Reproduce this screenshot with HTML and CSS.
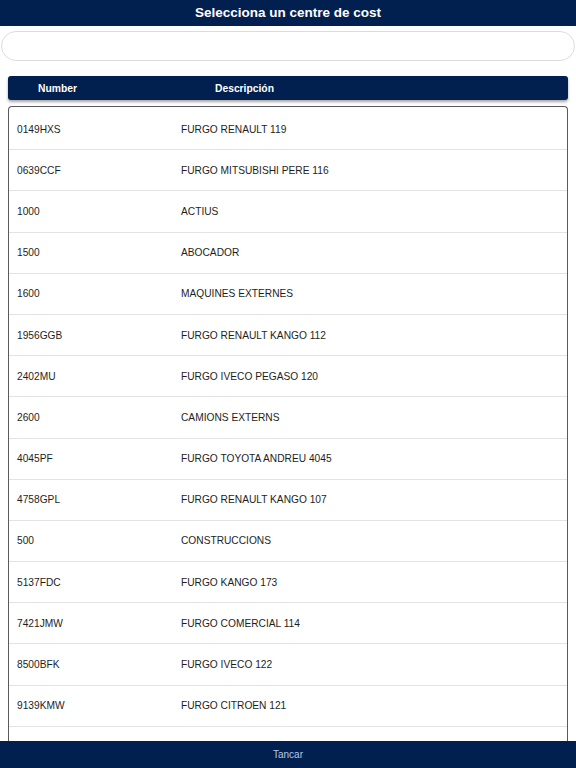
FILE: index.html
```html
<!DOCTYPE html>
<html lang="ca">
<head>
<meta charset="utf-8">
<title>Selecciona un centre de cost</title>
<link rel="stylesheet" href="styles.css">
</head>
<body>
<div class="page">
  <header class="titlebar">Selecciona un centre de cost</header>
  <div class="search"></div>
  <div class="thead">
    <span class="col-num">Number</span>
    <span class="col-desc">Descripción</span>
  </div>
  <div class="list">
    <div class="row"><span class="c-num">0149HXS</span><span class="c-desc">FURGO RENAULT 119</span></div>
    <div class="row"><span class="c-num">0639CCF</span><span class="c-desc">FURGO MITSUBISHI PERE 116</span></div>
    <div class="row"><span class="c-num">1000</span><span class="c-desc">ACTIUS</span></div>
    <div class="row"><span class="c-num">1500</span><span class="c-desc">ABOCADOR</span></div>
    <div class="row"><span class="c-num">1600</span><span class="c-desc">MAQUINES EXTERNES</span></div>
    <div class="row"><span class="c-num">1956GGB</span><span class="c-desc">FURGO RENAULT KANGO 112</span></div>
    <div class="row"><span class="c-num">2402MU</span><span class="c-desc">FURGO IVECO PEGASO 120</span></div>
    <div class="row"><span class="c-num">2600</span><span class="c-desc">CAMIONS EXTERNS</span></div>
    <div class="row"><span class="c-num">4045PF</span><span class="c-desc">FURGO TOYOTA ANDREU 4045</span></div>
    <div class="row"><span class="c-num">4758GPL</span><span class="c-desc">FURGO RENAULT KANGO 107</span></div>
    <div class="row"><span class="c-num">500</span><span class="c-desc">CONSTRUCCIONS</span></div>
    <div class="row"><span class="c-num">5137FDC</span><span class="c-desc">FURGO KANGO 173</span></div>
    <div class="row"><span class="c-num">7421JMW</span><span class="c-desc">FURGO COMERCIAL 114</span></div>
    <div class="row"><span class="c-num">8500BFK</span><span class="c-desc">FURGO IVECO 122</span></div>
    <div class="row"><span class="c-num">9139KMW</span><span class="c-desc">FURGO CITROEN 121</span></div>
    <div class="row"><span class="c-num"></span><span class="c-desc"></span></div>
  </div>
  <footer class="footer">Tancar</footer>
</div>
</body>
</html>
```
FILE: styles.css
```css
html, body {
  margin: 0;
  padding: 0;
  background: #ffffff;
}
body {
  font-family: "Liberation Sans", Arial, Helvetica, sans-serif;
  color: #1e1e1e;
}
.page {
  height: 768px;
  display: flex;
  flex-direction: column;
  overflow: hidden;
}
.titlebar {
  flex: 0 0 26px;
  background: #02204f;
  color: #ffffff;
  font-weight: bold;
  font-size: 13.5px;
  line-height: 26px;
  text-align: center;
}
.search {
  flex: 0 0 30px;
  margin: 5px 1px 0 1px;
  box-sizing: border-box;
  border: 1px solid #dcdcdc;
  border-radius: 15px;
  background: #ffffff;
}
.thead {
  flex: 0 0 24px;
  margin: 15px 8px 0 8px;
  background: #02204f;
  border-radius: 3px;
  box-shadow: 0 2px 3px rgba(0, 0, 0, 0.35);
  color: #ffffff;
  font-weight: bold;
  font-size: 10.3px;
  display: flex;
  align-items: center;
}
.col-num {
  width: 207px;
  padding-left: 30px;
  box-sizing: border-box;
}
.list {
  flex: 1 1 auto;
  margin: 6px 8px 0 8px;
  border: 1px solid #5a5a5a;
  border-bottom: none;
  border-radius: 4px 4px 0 0;
  padding-top: 2px;
  overflow: hidden;
  background: #ffffff;
}
.row {
  height: 41.2px;
  box-sizing: border-box;
  border-bottom: 1px solid #e3e3e3;
  display: flex;
  align-items: center;
  font-size: 10.2px;
}
.c-num {
  width: 172px;
  padding-left: 8px;
  box-sizing: border-box;
}
.footer {
  flex: 0 0 27px;
  background: #02204f;
  color: #b3c7ea;
  font-size: 10px;
  line-height: 27px;
  text-align: center;
}
```
